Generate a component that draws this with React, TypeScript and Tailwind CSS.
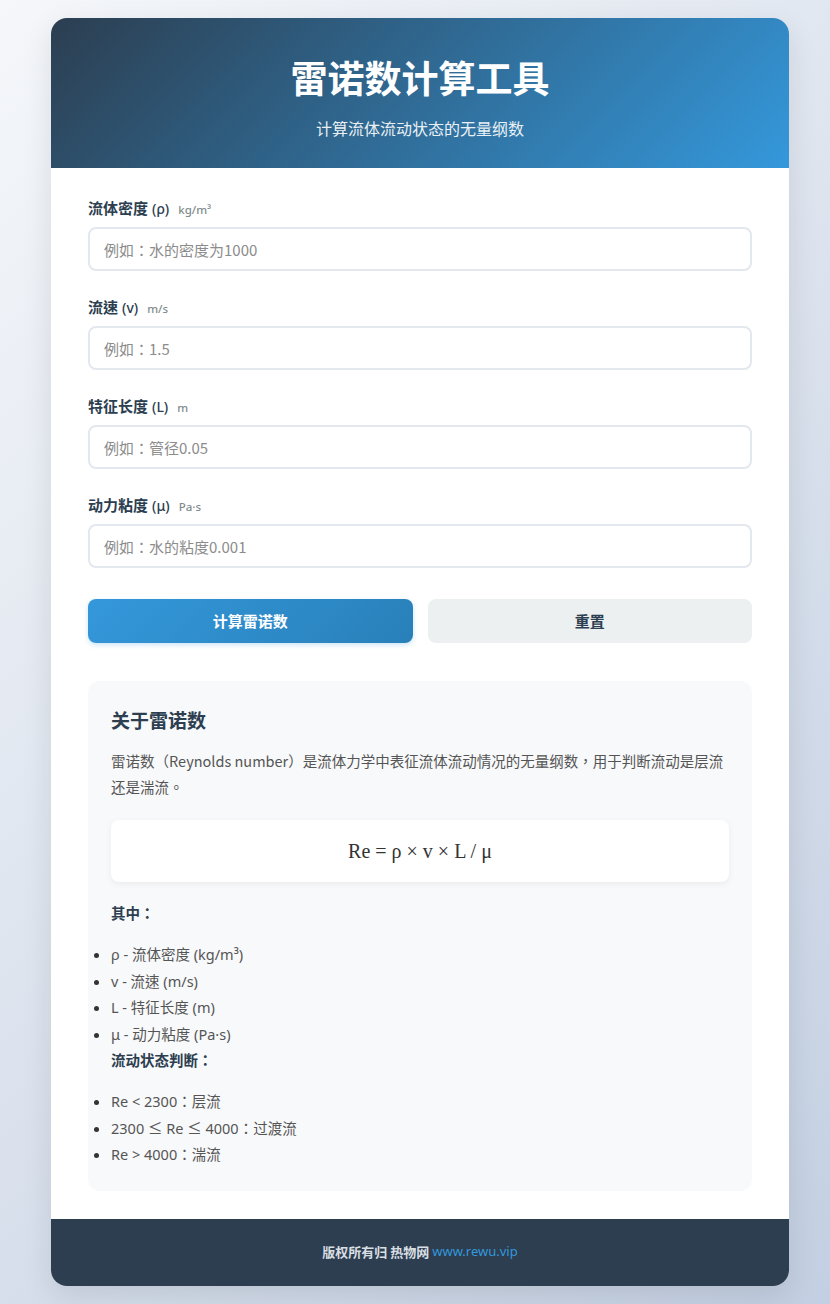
import React, { useState } from 'react';

const font = "font-['Noto_Sans_CJK_TC','Noto_Sans_CJK_SC',sans-serif]";
const latin = "font-['Noto_Sans','Noto_Sans_CJK_TC',sans-serif]";

interface Field {
  key: string;
  label: string;
  symbol: string;
  unit: string;
  placeholder: string;
}

const fields: Field[] = [
  { key: 'rho', label: '流体密度', symbol: '(ρ)', unit: 'kg/m³', placeholder: '例如：水的密度为1000' },
  { key: 'v', label: '流速', symbol: '(v)', unit: 'm/s', placeholder: '例如：1.5' },
  { key: 'L', label: '特征长度', symbol: '(L)', unit: 'm', placeholder: '例如：管径0.05' },
  { key: 'mu', label: '动力粘度', symbol: '(μ)', unit: 'Pa·s', placeholder: '例如：水的粘度0.001' },
];

export default function App() {
  const [values, setValues] = useState<Record<string, string>>({});

  const handleReset = () => setValues({});

  return (
    <div className={`min-h-screen bg-[linear-gradient(135deg,#f5f7fa_0%,#c3cfe2_100%)] pl-[51px] pt-[18px] pb-[19px] ${font}`}>
      <div className="w-[738px] rounded-2xl overflow-hidden bg-white shadow-[0_10px_30px_rgba(0,0,0,0.1)]">
        {/* Header */}
        <div className="h-[150px] bg-[linear-gradient(135deg,#2c3e50,#3498db)] text-white text-center pt-[37px]">
          <h1 className="text-[37px] leading-[45px] font-bold">雷诺数计算工具</h1>
          <p className="mt-[16px] text-[16px] leading-6 opacity-90">计算流体流动状态的无量纲数</p>
        </div>

        {/* Body */}
        <div className="px-[37px] pt-[30px] pb-[28px]">
          {fields.map(f => (
            <div key={f.key} className="mb-[26px]">
              <label className="flex items-baseline h-5 leading-5 mb-[9px] text-[15px] font-bold text-[#2c3e50]">
                {f.label}
                <span className={`ml-1 font-medium text-[14px] ${latin}`}>{f.symbol}</span>
                <span className={`ml-[9px] text-[11.5px] font-medium text-[#7f8c8d] ${latin}`}>{f.unit}</span>
              </label>
              <input
                type="number"
                value={values[f.key] || ''}
                onChange={(e) => setValues({ ...values, [f.key]: e.target.value })}
                placeholder={f.placeholder}
                className="w-full h-[44px] px-[14px] rounded-lg border-2 border-[#e3e8ee] text-[15px] text-[#333] placeholder:text-[#8c8c8c] outline-none focus:border-[#3498db]"
              />
            </div>
          ))}

          <div className="mt-[31px] flex gap-[15px]">
            <button className="flex-1 h-[44px] rounded-lg bg-[linear-gradient(135deg,#3498db,#2980b9)] text-white text-[15px] font-bold shadow-[0_2px_5px_rgba(52,152,219,0.25)]">
              计算雷诺数
            </button>
            <button onClick={handleReset} className="flex-1 h-[44px] rounded-lg bg-[#ecf0f1] text-[#2c3e50] text-[15px] font-bold">
              重置
            </button>
          </div>

          {/* Info */}
          <div className="mt-[38px] rounded-xl bg-[#f8f9fa] px-[23px] pt-[26px] pb-[23px]">
            <h3 className="text-[19px] leading-[26px] font-bold text-[#2c3e50]">关于雷诺数</h3>
            <p className="mt-[15px] text-[14.5px] leading-[26px] text-[#555]">
              雷诺数（Reynolds number）是流体力学中表征流体流动情况的无量纲数，用于判断流动是层流还是湍流。
            </p>
            <div className="mt-[20px] h-[62px] flex items-center justify-center rounded-lg bg-white shadow-[0_2px_6px_rgba(0,0,0,0.06)] font-['Liberation_Serif',serif] text-[20px] text-[#333]">
              Re = ρ × v × L / μ
            </div>
            <p className="mt-[18px] text-[14.5px] leading-[26px] font-bold text-[#2c3e50]">其中：</p>
            <ul className={`mt-[15px] list-disc text-[14.5px] leading-[26.5px] text-[#555] marker:text-[#333] ${latin}`}>
              <li>ρ - 流体密度 (kg/m³)</li>
              <li>v - 流速 (m/s)</li>
              <li>L - 特征长度 (m)</li>
              <li>μ - 动力粘度 (Pa·s)</li>
            </ul>
            <p className="text-[14.5px] leading-[26px] font-bold text-[#2c3e50]">流动状态判断：</p>
            <ul className={`mt-[15px] list-disc text-[14.5px] leading-[26.5px] text-[#555] marker:text-[#333] ${latin}`}>
              <li>Re &lt; 2300：层流</li>
              <li>2300 ≤ Re ≤ 4000：过渡流</li>
              <li>Re &gt; 4000：湍流</li>
            </ul>
          </div>
        </div>

        {/* Footer */}
        <div className="h-[67px] bg-[#2c3e50] flex items-center justify-center text-[13px] font-semibold text-[#d9dee3]">
          版权所有归 热物网&nbsp;<a href="#" className={`font-normal text-[#3498db] ${latin}`}>www.rewu.vip</a>
        </div>
      </div>
    </div>
  );
}
